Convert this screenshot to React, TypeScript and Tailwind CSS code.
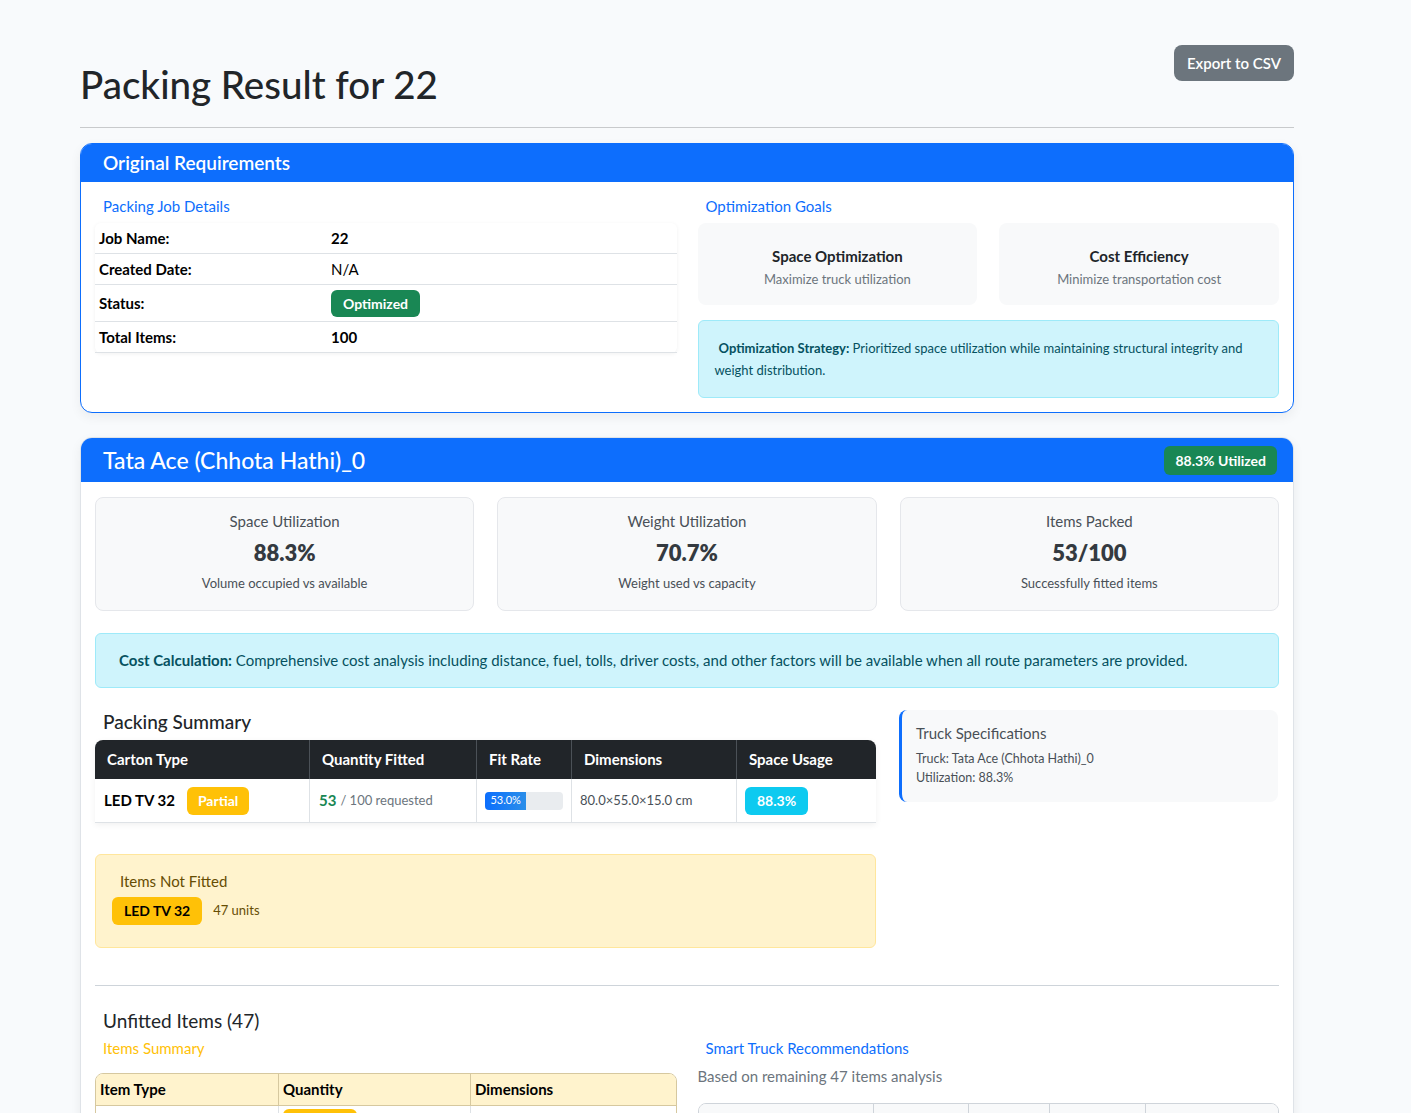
import React from 'react'

const stats = [
  { title: 'Space Utilization', value: '88.3%', sub: 'Volume occupied vs available' },
  { title: 'Weight Utilization', value: '70.7%', sub: 'Weight used vs capacity' },
  { title: 'Items Packed', value: '53/100', sub: 'Successfully fitted items' },
]

function JobDetails() {
  return (
    <div>
      <div className="px-2 h-[25px] leading-[25px] text-[15px] text-[#0d6efd]">Packing Job Details</div>
      <div className="mt-[4px] rounded-md bg-white shadow-[0_1px_4px_rgba(0,0,0,0.06)] text-[15px] text-black">
        <div className="flex h-[31px] items-center border-b border-[#dee2e6]">
          <div className="w-[236px] pl-1 font-bold">Job Name:</div>
          <div className="font-bold">22</div>
        </div>
        <div className="flex h-[31px] items-center border-b border-[#dee2e6]">
          <div className="w-[236px] pl-1 font-bold">Created Date:</div>
          <div>N/A</div>
        </div>
        <div className="flex h-[37px] items-center border-b border-[#dee2e6]">
          <div className="w-[236px] pl-1 font-bold">Status:</div>
          <div className="h-[27px] leading-[27px] rounded-md bg-[#198754] px-3 text-[14px] font-bold text-white">Optimized</div>
        </div>
        <div className="flex h-[31px] items-center border-b border-[#dee2e6]">
          <div className="w-[236px] pl-1 font-bold">Total Items:</div>
          <div className="font-bold">100</div>
        </div>
      </div>
    </div>
  )
}

function Goals() {
  return (
    <div>
      <div className="px-2 h-[25px] leading-[25px] text-[15px] text-[#0d6efd]">Optimization Goals</div>
      <div className="mt-[4px] grid grid-cols-2 gap-[22px]">
        {[
          ['Space Optimization', 'Maximize truck utilization'],
          ['Cost Efficiency', 'Minimize transportation cost'],
        ].map(([t, s]) => (
          <div key={t} className="h-[82px] rounded-lg bg-[#f8f9fa] pt-[22px] text-center">
            <div className="text-[15px] leading-[22px] font-bold text-[#212529]">{t}</div>
            <div className="mt-[2px] text-[13px] leading-[20px] text-[#6c757d]">{s}</div>
          </div>
        ))}
      </div>
      <div className="mt-[15px] rounded-md border border-[#9eeaf9] bg-[#cff4fc] px-4 py-4 text-[13px] leading-[22px] text-[#055160]">
        <b className="ml-1 font-bold">Optimization Strategy:</b> Prioritized space utilization while maintaining structural integrity and weight distribution.
      </div>
    </div>
  )
}

function PackingTable() {
  return (
    <div className="mt-[7px] overflow-hidden rounded-t-lg bg-white shadow-[0_2px_6px_rgba(0,0,0,0.06)]">
      <div className="grid grid-cols-[214px_167px_95px_165px_140px] h-[39px] bg-[#212529] text-[15px] font-bold text-white">
        {['Carton Type', 'Quantity Fitted', 'Fit Rate', 'Dimensions', 'Space Usage'].map((h, i) => (
          <div key={h} className={`flex items-center px-3 ${i > 0 ? 'border-l border-[#4b5157]' : ''}`}>{h}</div>
        ))}
      </div>
      <div className="grid grid-cols-[214px_167px_95px_165px_140px] h-[44px] border-b border-[#dee2e6]">
        <div className="flex items-center gap-3 px-[9px]">
          <span className="text-[15px] font-bold text-black">LED TV 32</span>
          <span className="h-[28px] leading-[28px] rounded-md bg-[#ffc107] px-[11px] text-[14px] font-bold text-white">Partial</span>
        </div>
        <div className="flex items-center gap-1 border-l border-[#dee2e6] px-[9px]">
          <span className="text-[15px] font-bold text-[#198754]">53</span>
          <span className="text-[13px] text-[#6c757d]">/ 100 requested</span>
        </div>
        <div className="flex items-center border-l border-[#dee2e6] px-2">
          <div className="h-[18px] w-[79px] overflow-hidden rounded bg-[#e9ecef]">
            <div className="flex h-full items-center justify-center bg-gradient-to-r from-[#0d6efd] to-[#2b8ee9] text-[11px] text-white" style={{ width: '53%' }}>53.0%</div>
          </div>
        </div>
        <div className="flex items-center border-l border-[#dee2e6] px-2 text-[13px] text-[#495057]">80.0×55.0×15.0 cm</div>
        <div className="flex items-center border-l border-[#dee2e6] px-2">
          <span className="h-[28px] leading-[28px] rounded-md bg-[#0dcaf0] px-3 text-[14px] font-bold text-white">88.3%</span>
        </div>
      </div>
    </div>
  )
}

export default function App() {
  return (
    <div className="min-h-screen bg-[#f8fafc] font-['Lato','Noto_Sans',sans-serif] text-[#212529]">
      <div className="ml-[80px] w-[1214px] pt-[45px]">
        <div className="flex items-start justify-between">
          <h1 className="mt-[15px] text-[38.5px] leading-[48px] font-medium text-[#212529]">Packing Result for 22</h1>
          <button className="h-[36px] rounded-lg bg-[#6c757d] px-[13px] text-[15px] font-semibold text-white">Export to CSV</button>
        </div>
        <hr className="mt-[19px] border-t border-[#c8cacc]" />

        <div className="mt-[15px] overflow-hidden rounded-xl border border-[#0d6efd] bg-white shadow-[0_4px_12px_rgba(0,0,0,0.06)]">
          <div className="flex h-[38px] items-center bg-[#0d6efd] px-[22px] text-[19px] font-semibold text-white">Original Requirements</div>
          <div className="grid grid-cols-2 gap-[21px] px-[14px] pt-[12px] pb-[14px]">
            <JobDetails />
            <Goals />
          </div>
        </div>

        <div className="mt-[24px] overflow-hidden rounded-t-xl border border-[#dfe3e8] bg-white pb-10 shadow-[0_4px_12px_rgba(0,0,0,0.06)]">
          <div className="flex h-[44px] items-center justify-between bg-[#0d6efd] pl-[22px] pr-4">
            <div className="text-[23px] font-medium text-white">Tata Ace (Chhota Hathi)_0</div>
            <div className="h-[29px] leading-[29px] rounded-md bg-[#198754] px-[11px] text-[14px] font-bold text-white">88.3% Utilized</div>
          </div>
          <div className="px-[14px] pt-[15px]">
            <div className="grid grid-cols-3 gap-[23px]">
              {stats.map(s => (
                <div key={s.title} className="h-[114px] rounded-lg border border-[#e5e7eb] bg-[#f8f9fa] pt-[12px] text-center">
                  <div className="text-[15px] leading-[22px] text-[#495057]">{s.title}</div>
                  <div className="mt-[6px] text-[22px] leading-[30px] font-extrabold text-[#343a40]">{s.value}</div>
                  <div className="mt-[5px] text-[13px] leading-[20px] text-[#495057]">{s.sub}</div>
                </div>
              ))}
            </div>

            <div className="mt-[22px] flex h-[55px] items-center rounded-md border border-[#9eeaf9] bg-[#cff4fc] px-[23px] text-[15px] text-[#055160]">
              <span className="font-bold">Cost Calculation:</span>&nbsp;Comprehensive cost analysis including distance, fuel, tolls, driver costs, and other factors will be available when all route parameters are provided.
            </div>

            <div className="mt-[22px] grid grid-cols-[781px_379px] gap-[23px]">
              <div>
                <div className="px-2 h-[23px] leading-[23px] text-[19px] font-medium text-[#212529]">Packing Summary</div>
                <PackingTable />
                <div className="mt-[31px] rounded-md border border-[#ffe69c] bg-[#fff3cd] px-4 pt-[15px] pb-[22px] text-[#664d03]">
                  <div className="pl-2 text-[15px] leading-[22px]">Items Not Fitted</div>
                  <div className="mt-[5px] flex items-center gap-[11px]">
                    <span className="h-[28px] leading-[28px] rounded-md bg-[#ffc107] px-3 text-[14px] font-bold text-black">LED TV 32</span>
                    <span className="text-[13px]">47 units</span>
                  </div>
                </div>
              </div>
              <div>
                <div className="h-[92px] rounded-lg border-l-[3px] border-[#0d6efd] bg-[#f8f9fa] pl-[14px] pt-[12px]">
                  <div className="text-[15px] leading-[22px] text-[#495057]">Truck Specifications</div>
                  <div className="mt-[5px] text-[12.5px] leading-[19px] text-[#495057]">Truck: Tata Ace (Chhota Hathi)_0</div>
                  <div className="text-[12.5px] leading-[19px] text-[#495057]">Utilization: 88.3%</div>
                </div>
              </div>
            </div>

            <hr className="mt-[37px] border-t border-[#ced4da]" />

            <div className="mt-[23px] px-2 h-[24px] leading-[24px] text-[19px] text-[#212529]">Unfitted Items (47)</div>
            <div className="mt-[4px] grid grid-cols-2 gap-[21px]">
              <div>
                <div className="px-2 h-[22px] leading-[22px] text-[15px] text-[#ffc107]">Items Summary</div>
                <div className="mt-[14px] overflow-hidden rounded-t-lg border border-[#d6c89f]">
                  <div className="grid grid-cols-[182px_192px_1fr] h-[31px] bg-[#fff3cd] text-[15px] font-bold text-black">
                    <div className="flex items-center px-1">Item Type</div>
                    <div className="flex items-center border-l border-[#d6c89f] px-1">Quantity</div>
                    <div className="flex items-center border-l border-[#d6c89f] px-1">Dimensions</div>
                  </div>
                  <div className="grid grid-cols-[182px_192px_1fr] h-[40px] border-t border-[#d6c89f]">
                    <div className="flex items-center px-1 text-[14px]">LED TV 32</div>
                    <div className="flex items-start border-l border-[#dee2e6] px-1 pt-[3px]">
                      <span className="h-[26px] leading-[26px] rounded-md bg-[#ffc107] px-3 text-[14px] font-bold text-black">47 units</span>
                    </div>
                    <div className="flex items-center border-l border-[#dee2e6] px-1 text-[13px]">80.0×55.0×15.0 cm</div>
                  </div>
                </div>
              </div>
              <div>
                <div className="px-2 h-[22px] leading-[22px] text-[15px] text-[#0d6efd]">Smart Truck Recommendations</div>
                <div className="mt-[6px] h-[22px] leading-[22px] text-[15px] text-[#6c757d]">Based on remaining 47 items analysis</div>
                <div className="mt-[16px] overflow-hidden rounded-t-lg border border-[#cfd4da]">
                  <div className="grid grid-cols-[174px_95px_81px_96px_1fr] h-[34px] bg-[#f8f9fa] text-[15px] font-bold text-black">
                    <div className="flex items-center px-2">Truck Type</div>
                    <div className="flex items-center border-l border-[#cfd4da] px-1">Required</div>
                    <div className="flex items-center border-l border-[#cfd4da] px-1">Capacity</div>
                    <div className="flex items-center border-l border-[#cfd4da] px-1">Utilization</div>
                    <div className="flex items-center border-l border-[#cfd4da] px-1">Cost</div>
                  </div>
                </div>
              </div>
            </div>
          </div>
        </div>
      </div>
    </div>
  )
}
